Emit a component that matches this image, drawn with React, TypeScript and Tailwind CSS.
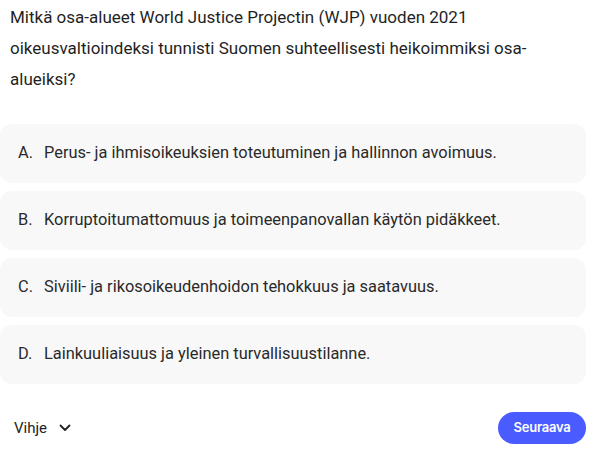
import React from "react";

const options = [
  { k: "A.", t: "Perus- ja ihmisoikeuksien toteutuminen ja hallinnon avoimuus." },
  { k: "B.", t: "Korruptoitumattomuus ja toimeenpanovallan käytön pidäkkeet." },
  { k: "C.", t: "Siviili- ja rikosoikeudenhoidon tehokkuus ja saatavuus." },
  { k: "D.", t: "Lainkuuliaisuus ja yleinen turvallisuustilanne." },
];

export default function App() {
  return (
    <div
      className="w-[614px] h-[456px] bg-white text-[#1f1f1f] overflow-hidden"
      style={{ fontFamily: "Roboto, 'Noto Sans', sans-serif" }}
    >
      <div className="w-[586px]">
        <p className="pl-[10px] pt-[2px] text-[17px] leading-[31px] text-[#1f1f1f]">
          Mitkä osa-alueet World Justice Projectin (WJP) vuoden 2021 oikeusvaltioindeksi tunnisti Suomen suhteellisesti heikoimmiksi osa-alueiksi?
        </p>
        <div className="mt-[29px] flex flex-col gap-[8px]">
          {options.map((o) => (
            <div
              key={o.k}
              className="h-[59px] rounded-[12px] bg-[#f8f8f8] flex items-center pl-[18px] text-[16.4px] text-[#2a2a2a]"
            >
              <span className="w-[26px]">{o.k}</span>
              <span>{o.t}</span>
            </div>
          ))}
        </div>
        <div className="mt-[28px] flex items-center justify-between">
          <div className="flex items-center pl-[14px] text-[15px] text-[#222]">
            <span>Vihje</span>
            <svg className="ml-[12px]" width="12" height="8" viewBox="0 0 12 8" fill="none">
              <path d="M1.5 1.5 L6 6 L10.5 1.5" stroke="#222" strokeWidth="1.8" strokeLinecap="round" strokeLinejoin="round" />
            </svg>
          </div>
          <button
            className="h-[32px] w-[88px] rounded-full bg-[#4a5cff] text-white text-[13px] font-semibold tracking-[-0.02em]"
            style={{ fontFamily: "Inter, Roboto, sans-serif" }}
          >
            Seuraava
          </button>
        </div>
      </div>
    </div>
  );
}
